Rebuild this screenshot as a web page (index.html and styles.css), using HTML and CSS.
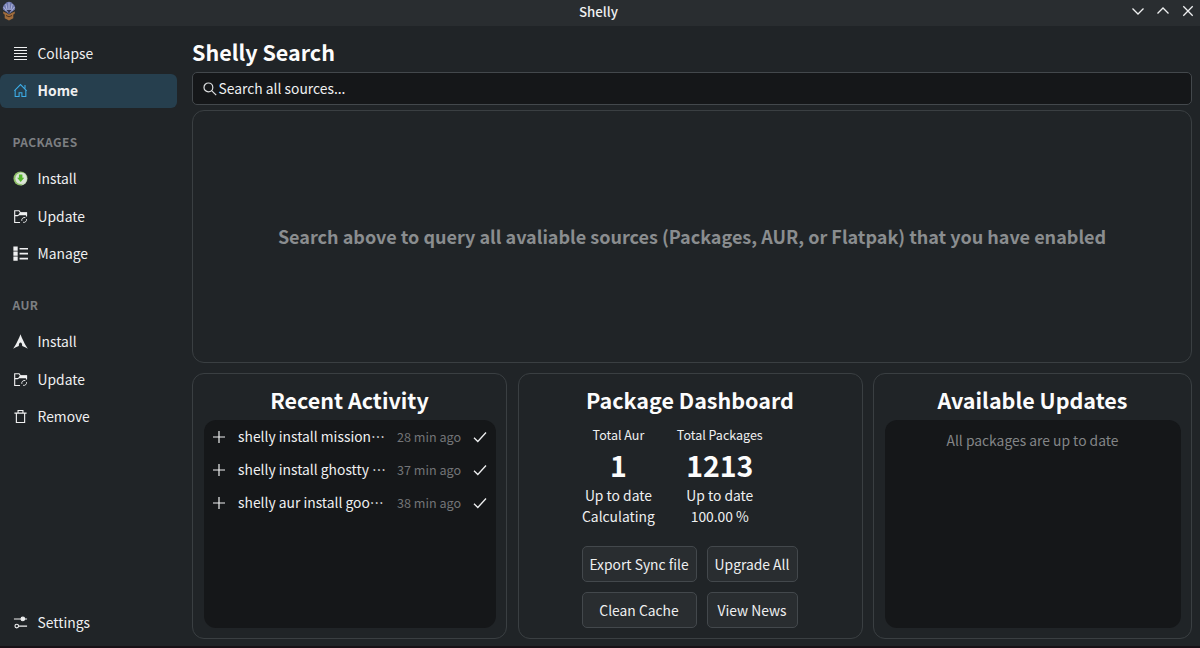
FILE: index.html
```html
<!DOCTYPE html>
<html lang="en">
<head>
    <meta charset="UTF-8">
    <meta name="viewport" content="width=device-width, initial-scale=1.0">
    <title>Shelly</title>
    <link rel="stylesheet" href="styles.css">
</head>
<body>
    <!-- Shared icons -->
    <svg class="sprite">
        <symbol id="icon-update" viewBox="0 0 16 16">
            <path d="M7.5 14.4H1.8V1.8H6.5L8 4H14.4V8" fill="none" stroke="currentColor" stroke-width="1.2"/>
            <path d="M7.5 3.6H15V6.6H6.8L5 7.8H2V6.4H5.4Z" fill="currentColor"/>
            <path d="M9.4 12.6A2.9 2.9 0 0 1 13.2 9.2M14.4 10.8A2.9 2.9 0 0 1 10.8 14.2" fill="none" stroke="currentColor"/>
        </symbol>
        <symbol id="icon-plus" viewBox="0 0 14 14">
            <path d="M7 1V13M1 7H13" fill="none" stroke="currentColor" stroke-width="1.2"/>
        </symbol>
        <symbol id="icon-check" viewBox="0 0 14 12">
            <path d="M1 6.8L4.8 10.5L13 1.5" fill="none" stroke="currentColor" stroke-width="1.3"/>
        </symbol>
    </svg>

    <header class="titlebar">
        <svg class="app-icon" viewBox="0 0 14 20">
            <path d="M7 13L1 8.5Q.2 5 3 3Q4.4 .8 7 .8T11 3Q13.8 5 13 8.5Z" fill="#6f78ae"/>
            <path d="M7 12V1.5M5.6 11L3.8 3M8.4 11L10.2 3M4.4 10L1.6 6M9.6 10L12.4 6" stroke="#b9bddd" stroke-width=".9"/>
            <path d="M1 10.5L4.5 12L7 13.5L9.5 12L13 10.5L12.5 13L11.3 13.6V17.3L7 19.4L2.7 17.3V13.6L1.5 13Z" fill="#a06c3c"/>
            <path d="M4 14.5L7 15.8L10 14.5" fill="none" stroke="#4d321f"/>
            <path d="M4.5 9L7 12.5L9.5 9Z" fill="#343753"/>
        </svg>
        <span class="title">Shelly</span>
        <div class="window-buttons">
            <svg viewBox="0 0 14 14"><path d="M1.5 4.5L7 10L12.5 4.5"/></svg>
            <svg viewBox="0 0 14 14"><path d="M1.5 9.5L7 4L12.5 9.5"/></svg>
            <svg viewBox="0 0 14 14"><path d="M2.3 2.3L11.7 11.7M11.7 2.3L2.3 11.7"/></svg>
        </div>
    </header>

    <div class="window">
        <nav class="sidebar">
            <a class="nav-item">
                <svg viewBox="0 0 15 15"><path d="M1 1.5H14M1 4.5H14M1 7.5H14M1 10.5H14M1 13.5H14" stroke="currentColor" stroke-width="1.1"/></svg>
                Collapse
            </a>
            <a class="nav-item active">
                <svg viewBox="0 0 16 16" fill="none" stroke="#3daee9" stroke-width="1.1"><path d="M1.4 8.3L8 1.7L14.6 8.3M2.3 7.6V14.4H6.5V10.5H9.5V14.4H13.7V7.6M12.8 5.8V2"/></svg>
                Home
            </a>

            <h4>PACKAGES</h4>
            <a class="nav-item">
                <svg viewBox="0 0 16 16">
                    <circle cx="8" cy="8" r="7.5" fill="#8fc068"/>
                    <path d="M5 1.2A7.5 7.5 0 0 1 8 15.5A7.5 7.5 0 0 0 12 2Z" fill="#c9d3c6"/>
                    <circle cx="8.5" cy="7.9" r="6" fill="#dce5d8"/>
                    <path d="M6.3 3.8H10V7.2H12L8.2 11.8L4.4 7.2H6.3Z" fill="#55b82b"/>
                </svg>
                Install
            </a>
            <a class="nav-item"><svg><use href="#icon-update"/></svg>Update</a>
            <a class="nav-item">
                <svg viewBox="0 0 16 16" fill="currentColor"><path d="M.4 .6H5V5H.4ZM.4 5.9H5V10.3H.4ZM.4 11.2H5V15.6H.4ZM7 2H16V3.7H7ZM7 7.3H16V9H7ZM7 12.6H16V14.3H7Z"/></svg>
                Manage
            </a>

            <h4>AUR</h4>
            <a class="nav-item">
                <svg viewBox="0 0 16 16"><path d="M8 .2C7 3.4 3.2 11.4 .2 15.6C2.8 14.2 4.6 13.2 6.2 12.8C6 10.8 6.9 9 8 9S10 10.8 9.8 12.8C11.4 13.2 13.2 14.2 15.8 15.6C12.8 11.4 9 3.4 8 .2Z" fill="currentColor"/></svg>
                Install
            </a>
            <a class="nav-item"><svg><use href="#icon-update"/></svg>Update</a>
            <a class="nav-item">
                <svg viewBox="0 0 16 16" fill="none" stroke="currentColor" stroke-width="1.2"><path d="M1.5 4.4H14.5M5.4 4V1.6H10.6V4M3.6 4.4V14.4H12.4V4.4"/></svg>
                Remove
            </a>

            <a class="nav-item settings">
                <svg viewBox="0 0 16 16" fill="none" stroke="currentColor" stroke-width="1.2"><path d="M1 4.2H15M6 11.8H15"/><circle cx="10.5" cy="4.2" r="1.9" fill="currentColor"/><circle cx="4" cy="11.8" r="1.9"/></svg>
                Settings
            </a>
        </nav>

        <main>
            <h1>Shelly Search</h1>
            <div class="search-box">
                <svg viewBox="0 0 14 14"><circle cx="5.4" cy="5.4" r="4.4"/><path d="M8.6 8.6L13.2 13.2"/></svg>
                <span>Search all sources...</span>
            </div>
            <section class="results">
                <p>Search above to query all avaliable sources (Packages, AUR, or Flatpak) that you have enabled</p>
            </section>

            <div class="cards">
                <section class="card">
                    <h2>Recent Activity</h2>
                    <div class="list">
                        <div class="activity">
                            <svg class="plus"><use href="#icon-plus"/></svg>
                            <span class="command" lang="zh-CN">shelly install mission…</span>
                            <span class="time">28 min ago</span>
                            <svg class="check"><use href="#icon-check"/></svg>
                        </div>
                        <div class="activity">
                            <svg class="plus"><use href="#icon-plus"/></svg>
                            <span class="command" lang="zh-CN">shelly install ghostty …</span>
                            <span class="time">37 min ago</span>
                            <svg class="check"><use href="#icon-check"/></svg>
                        </div>
                        <div class="activity">
                            <svg class="plus"><use href="#icon-plus"/></svg>
                            <span class="command" lang="zh-CN">shelly aur install goo…</span>
                            <span class="time">38 min ago</span>
                            <svg class="check"><use href="#icon-check"/></svg>
                        </div>
                    </div>
                </section>

                <section class="card dashboard">
                    <h2>Package Dashboard</h2>
                    <div class="dashboard-body">
                        <div class="stats">
                            <div class="stat">
                                <span class="label">Total Aur</span>
                                <span class="number">1</span>
                                <span>Up to date</span>
                                <span>Calculating</span>
                            </div>
                            <div class="stat">
                                <span class="label">Total Packages</span>
                                <span class="number">1213</span>
                                <span>Up to date</span>
                                <span>100.00 %</span>
                            </div>
                        </div>
                        <div class="actions">
                            <button>Export Sync file</button>
                            <button>Upgrade All</button>
                            <button>Clean Cache</button>
                            <button>View News</button>
                        </div>
                    </div>
                </section>

                <section class="card">
                    <h2>Available Updates</h2>
                    <div class="list">
                        <p class="empty">All packages are up to date</p>
                    </div>
                </section>
            </div>
        </main>
    </div>
</body>
</html>
```
FILE: styles.css
```css
* {
    box-sizing: border-box;
}

body {
    margin: 0;
    height: 648px;
    display: flex;
    flex-direction: column;
    overflow: hidden;
    font-family: "Noto Sans CJK SC", "Noto Sans", sans-serif;
    font-size: 13.85px;
    line-height: 21px;
    color: #eff0f1;
    background-color: #202427;
    border-bottom: 2px solid #171116;
}

h1, h2, h4, p {
    margin: 0;
}

.sprite {
    display: none;
}

/* Title bar */
.titlebar {
    height: 26px;
    flex-shrink: 0;
    display: grid;
    grid-template-columns: 1fr auto 1fr;
    align-items: center;
    padding: 0 5px 0 2px;
    background-color: #292d30;
}

.app-icon {
    width: 14px;
    height: 20px;
    margin-bottom: 5px;
}

.title {
    margin-bottom: 3px;
    font-size: 13.3px;
    font-weight: 500;
}

.window-buttons {
    display: flex;
    justify-content: flex-end;
    gap: 11px;
    margin-bottom: 4px;
}

.window-buttons svg {
    width: 14px;
    height: 14px;
    fill: none;
    stroke: #eff0f1;
    stroke-width: 1.3;
}

.window {
    flex: 1;
    display: flex;
    min-height: 0;
}

/* Sidebar */
.sidebar {
    width: 177px;
    display: flex;
    flex-direction: column;
    gap: 3.5px;
    padding: 10px 0 7px;
}

.nav-item {
    height: 34px;
    flex-shrink: 0;
    display: flex;
    align-items: center;
    gap: 9.5px;
    padding-left: 13px;
    border-radius: 6px;
}

.nav-item svg {
    width: 15px;
    height: 15px;
}

.nav-item.active {
    background-color: #263f4e;
    font-weight: bold;
}

.sidebar h4 {
    height: 47px;
    padding: 20px 0 0 12.5px;
    font-size: 12px;
    line-height: 21px;
    letter-spacing: .4px;
    color: #7c7f82;
}

.settings {
    margin-top: auto;
}

/* Main area */
main {
    flex: 1;
    min-width: 0;
    display: flex;
    flex-direction: column;
    padding: 10px 8px 7px 15px;
}

h1, h2 {
    font-size: 21.5px;
    line-height: 32px;
    color: #fcfcfc;
}

.search-box {
    height: 33px;
    display: flex;
    align-items: center;
    gap: 1.5px;
    margin-top: 4px;
    padding-left: 10px;
    background-color: #151719;
    border: 1px solid #43484c;
    border-radius: 5px;
}

.search-box svg {
    width: 14px;
    height: 14px;
    fill: none;
    stroke: #dddfe0;
    stroke-width: 1.2;
}

.results {
    height: 253px;
    display: flex;
    align-items: center;
    justify-content: center;
    margin-top: 5px;
    border: 1px solid #3a3f42;
    border-radius: 12px;
    font-size: 18px;
    font-weight: bold;
    color: #8a8d8f;
}

/* Bottom cards */
.cards {
    flex: 1;
    display: grid;
    grid-template-columns: 315px 345px 1fr;
    gap: 10.5px;
    margin-top: 10px;
}

.card {
    display: flex;
    flex-direction: column;
    padding: 10px 10.5px 10px;
    border: 1px solid #3a3f42;
    border-radius: 12px;
}

.card h2 {
    text-align: center;
}

.list {
    flex: 1;
    margin-top: 4px;
    background-color: #151719;
    border-radius: 12px;
}

.activity {
    height: 33px;
    display: flex;
    align-items: center;
    padding: 0 8.5px 0 8px;
}

.plus {
    width: 14px;
    height: 14px;
}

.command {
    width: 148px;
    margin-left: 12.5px;
    white-space: nowrap;
}

.time {
    margin-left: 11px;
    font-size: 12.6px;
    color: #737577;
}

.check {
    width: 14px;
    height: 12px;
    margin-left: auto;
}

.empty {
    padding-top: 10px;
    text-align: center;
    color: #838587;
}

.dashboard-body {
    width: 216px;
    margin: 8px auto 0 53px;
}

.stats {
    display: flex;
    gap: 22px;
}

.stat {
    display: flex;
    flex-direction: column;
    align-items: center;
}

.label {
    font-size: 12.5px;
}

.number {
    margin-bottom: 1px;
    font-size: 28.5px;
    font-weight: bold;
    line-height: 39px;
    color: #fcfcfc;
}

.actions {
    display: grid;
    grid-template-columns: 115px 91px;
    gap: 10px;
    margin-top: 19px;
}

button {
    height: 36px;
    padding: 0 1px 0 0;
    font: inherit;
    color: #eff0f1;
    background-color: #292d30;
    border: 1px solid #43484c;
    border-radius: 5px;
}
```
